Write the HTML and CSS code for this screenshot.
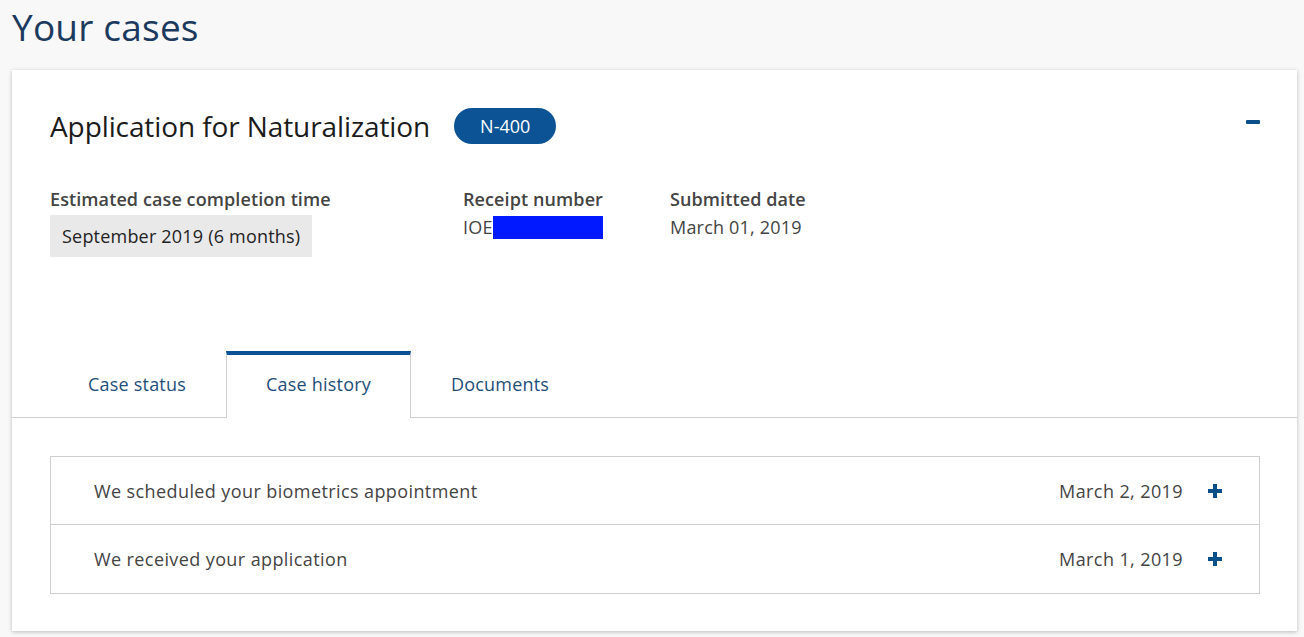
FILE: index.html
```html
<!DOCTYPE html>
<html>
<head>
<meta charset="utf-8">
<link rel="stylesheet" href="styles.css">
</head>
<body>
<h1 class="page-title">Your cases</h1>
<section class="card">
  <div class="card-head">
    <div class="case-title">
      <h2 class="case-name">Application for Naturalization</h2>
      <span class="badge">N-400</span>
    </div>
    <span class="collapse" aria-label="collapse"></span>
  </div>
  <div class="facts">
    <div class="fact fact-est">
      <div class="fact-label">Estimated case completion time</div>
      <div class="fact-box">September 2019 (6 months)</div>
    </div>
    <div class="fact fact-receipt">
      <div class="fact-label">Receipt number</div>
      <div class="fact-value">IOE<span class="redact"></span></div>
    </div>
    <div class="fact">
      <div class="fact-label">Submitted date</div>
      <div class="fact-value">March 01, 2019</div>
    </div>
  </div>
  <nav class="tabs">
    <a class="tab">Case status</a>
    <a class="tab active">Case history</a>
    <a class="tab">Documents</a>
  </nav>
  <div class="history">
    <div class="event">
      <span class="event-text">We scheduled your biometrics appointment</span>
      <span class="event-date">March 2, 2019</span>
      <span class="plus"></span>
    </div>
    <div class="event">
      <span class="event-text">We received your application</span>
      <span class="event-date">March 1, 2019</span>
      <span class="plus"></span>
    </div>
  </div>
</section>
</body>
</html>
```

FILE: styles.css
```css
html, body {
  margin: 0;
  padding: 0;
}
body {
  background: #f8f8f8;
  font-family: "Open Sans", "Liberation Sans", sans-serif;
  color: #333;
  width: 1304px;
  height: 637px;
  overflow: hidden;
}
.page-title {
  margin: 0;
  padding: 5px 0 0 12px;
  height: 70px;
  box-sizing: border-box;
  font-weight: 400;
  font-size: 37px;
  line-height: 44px;
  color: #1c3a5e;
  letter-spacing: 0.2px;
}
.card {
  margin-left: 12px;
  width: 1285px;
  height: 561px;
  background: #fff;
  box-shadow: 0 1px 4px rgba(0,0,0,0.25);
  box-sizing: border-box;
  padding-top: 38px;
}
.card-head {
  display: flex;
  align-items: center;
  justify-content: space-between;
  padding: 0 37px 0 38px;
  height: 36px;
}
.case-title {
  display: flex;
  align-items: center;
  gap: 24px;
}
.case-name {
  margin: 0;
  font-weight: 400;
  font-size: 28px;
  color: #1b1b1b;
  letter-spacing: -0.1px;
}
.badge {
  background: #0b5394;
  color: #fff;
  font-size: 18px;
  height: 36px;
  line-height: 36px;
  padding: 0 26px;
  border-radius: 18px;
}
.collapse {
  width: 14px;
  height: 4px;
  border-radius: 1px;
  background: #0b4f8a;
  margin-top: -8px;
}
.facts {
  display: flex;
  padding: 43px 0 0 38px;
  height: 160px;
  box-sizing: border-box;
}
.fact-label {
  font-weight: 600;
  font-size: 18px;
  letter-spacing: 0.1px;
  color: #444;
  line-height: 24px;
}
.fact-est { width: 413px; }
.fact-receipt { width: 207px; }
.fact-box {
  margin-top: 4px;
  background: #e9e9e9;
  padding: 0 12px;
  height: 42px;
  line-height: 42px;
  font-size: 18px;
  letter-spacing: 0.2px;
  color: #222;
  display: inline-block;
}
.fact-value {
  margin-top: 4px;
  font-size: 18px;
  letter-spacing: 0.2px;
  color: #444;
  line-height: 24px;
  display: flex;
  align-items: center;
}
.redact {
  display: inline-block;
  width: 110px;
  height: 23px;
  background: #0019ff;
}
.tabs {
  display: flex;
  padding-left: 36px;
  margin-top: 47px;
  border-bottom: 1px solid #cfcfcf;
  height: 66px;
}
.tab {
  width: 178px;
  display: flex;
  align-items: center;
  justify-content: center;
  font-size: 18px;
  letter-spacing: 0.2px;
  color: #1f4e7a;
  box-sizing: border-box;
  border-top: 4px solid transparent;
  padding-bottom: 4px;
}
.tab.active {
  width: 185px;
  background: #fff;
  border-top-color: #0b5394;
  border-left: 1px solid #cfcfcf;
  border-right: 1px solid #cfcfcf;
  margin-bottom: -1px;
  height: 67px;
  padding-bottom: 5px;
}
.history {
  margin: 38px 37px 0 38px;
  border: 1px solid #cfcfcf;
}
.event {
  display: flex;
  align-items: center;
  height: 67px;
  padding: 0 37px 0 43px;
  font-size: 18px;
  letter-spacing: 0.4px;
  color: #444;
}
.event + .event {
  border-top: 1px solid #cfcfcf;
  height: 68px;
}
.event-text { flex: 1; }
.event-date { margin-right: 25px; }
.plus {
  position: relative;
  width: 14px;
  height: 14px;
}
.plus::before, .plus::after {
  content: "";
  position: absolute;
  background: #0b4f8a;
}
.plus::before {
  left: 0; top: 5px; width: 14px; height: 4px;
}
.plus::after {
  left: 5px; top: 0; width: 4px; height: 14px;
}
```
